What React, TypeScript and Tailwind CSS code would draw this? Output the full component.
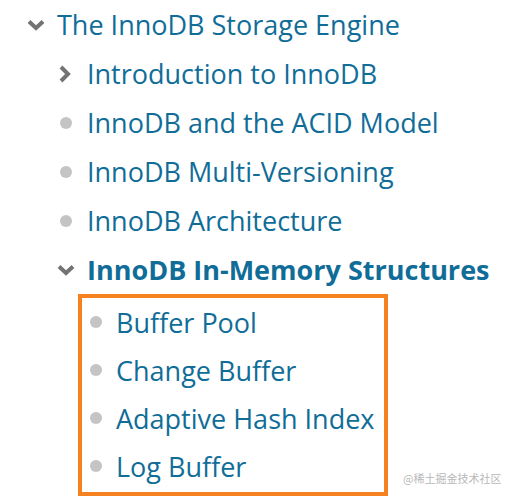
import React from 'react';

const ChevronDown = () => (
  <svg width="18" height="12" viewBox="0 0 18 12" className="shrink-0">
    <path d="M2 2.5 L9 9 L16 2.5" fill="none" stroke="#737373" strokeWidth="4" strokeLinejoin="miter" />
  </svg>
);

const ChevronRight = () => (
  <svg width="14" height="18" viewBox="0 0 14 18" className="shrink-0">
    <path d="M3 2 L10 9 L3 16" fill="none" stroke="#737373" strokeWidth="4" strokeLinejoin="miter" />
  </svg>
);

const Bullet = () => <span className="block w-[12px] h-[12px] rounded-full bg-[#c4c4c4] shrink-0" />;

function Row({
  icon,
  label,
  bold = false,
  height = 'h-[49px]',
  iconPad = 'pl-0',
}: {
  icon: React.ReactNode;
  label: string;
  bold?: boolean;
  height?: string;
  iconPad?: string;
}) {
  return (
    <div className={`flex items-center ${height}`}>
      <div className={`w-[30px] flex items-center ${iconPad}`}>{icon}</div>
      <span className={`text-[27px] leading-none whitespace-nowrap ${bold ? 'font-bold' : ''}`}>{label}</span>
    </div>
  );
}

export default function App() {
  const level2 = ['InnoDB and the ACID Model', 'InnoDB Multi-Versioning', 'InnoDB Architecture'];
  const level3 = ['Buffer Pool', 'Change Buffer', 'Adaptive Hash Index', 'Log Buffer'];

  return (
    <div
      className="relative w-[514px] h-[498px] bg-white text-[#106d98] overflow-hidden"
      style={{ fontFamily: '"Open Sans", "Noto Sans", sans-serif' }}
    >
      <div className="pl-[27px]">
        <Row icon={<ChevronDown />} label="The InnoDB Storage Engine" />
        <div className="pl-[30px]">
          <Row icon={<ChevronRight />} iconPad="pl-[1px]" label="Introduction to InnoDB" />
          {level2.map((l) => (
            <Row key={l} icon={<Bullet />} iconPad="pl-[3px]" label={l} />
          ))}
          <Row icon={<ChevronDown />} label="InnoDB In-Memory Structures" bold />
          {/* highlighted sub-list */}
          <div className="ml-[21px] w-[310px] border-4 border-[#f5821f] pl-[4px] pb-[2px]">
            {level3.map((l) => (
              <Row key={l} icon={<Bullet />} iconPad="pl-[4px]" height="h-[48px]" label={l} />
            ))}
          </div>
        </div>
      </div>
      <div
        className="absolute left-[403px] top-[471px] text-[11px] leading-[15px] whitespace-nowrap text-[#b8b8b8]"
        style={{ fontFamily: '"Noto Sans CJK SC", sans-serif' }}
      >
        @稀土掘金技术社区
      </div>
    </div>
  );
}
